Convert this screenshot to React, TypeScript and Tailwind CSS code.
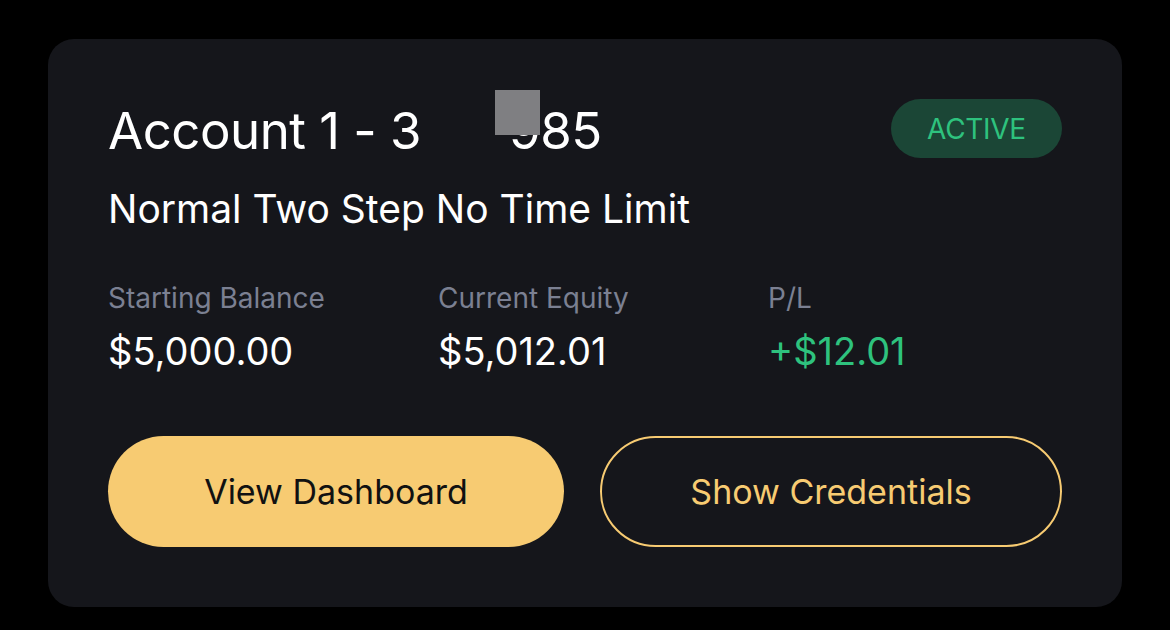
import React from 'react';

const stats = [
  { label: 'Starting Balance', value: '$5,000.00', tone: 'text-white' },
  { label: 'Current Equity', value: '$5,012.01', tone: 'text-white' },
  { label: 'P/L', value: '+$12.01', tone: 'text-[#2ec27e]' },
];

const App: React.FC = () => {
  return (
    <div className="min-h-[630px] w-[1170px] bg-black pl-12 pt-[39px]" style={{ fontFamily: 'Inter, "Liberation Sans", sans-serif' }}>
      <div className="w-[1074px] h-[568px] rounded-[26px] bg-[#15161b] px-[60px] pt-[60px]">
        <div className="flex items-start justify-between">
          <div className="relative flex items-center text-[51px] leading-[64px] text-white tracking-[-0.01em]">
            <span>Account 1 - 3</span>
            <span className="w-[88px]" />
            <span>985</span>
            <span className="absolute left-[387px] top-[-9px] h-[45px] w-[45px] bg-[#7f7f82]" />
          </div>
          <span className="flex h-[59px] w-[171px] items-center justify-center rounded-full bg-[#1b4636] text-[28px] text-[#2ec27e] tracking-[-0.01em]">
            ACTIVE
          </span>
        </div>

        <div className="mt-[23px] text-[39px] leading-[46px] text-white">
          Normal Two Step No Time Limit
        </div>

        <div className="mt-[50px] grid grid-cols-3 w-[990px]">
          {stats.map(s => (
            <div key={s.label}>
              <div className="text-[28px] leading-[33px] text-[#7b8092]">{s.label}</div>
              <div className={`mt-[14px] text-[38px] leading-[44px] ${s.tone}`}>{s.value}</div>
            </div>
          ))}
        </div>

        <div className="mt-[63px] flex gap-9">
          <button className="flex h-[111px] w-[456px] items-center justify-center rounded-full bg-[#f7cb72] text-[34px] text-[#111]">
            View Dashboard
          </button>
          <button className="flex h-[111px] w-[462px] items-center justify-center rounded-full border-2 border-[#f7cb72] text-[34px] text-[#f7cb72]">
            Show Credentials
          </button>
        </div>
      </div>
    </div>
  );
};

export default App;
